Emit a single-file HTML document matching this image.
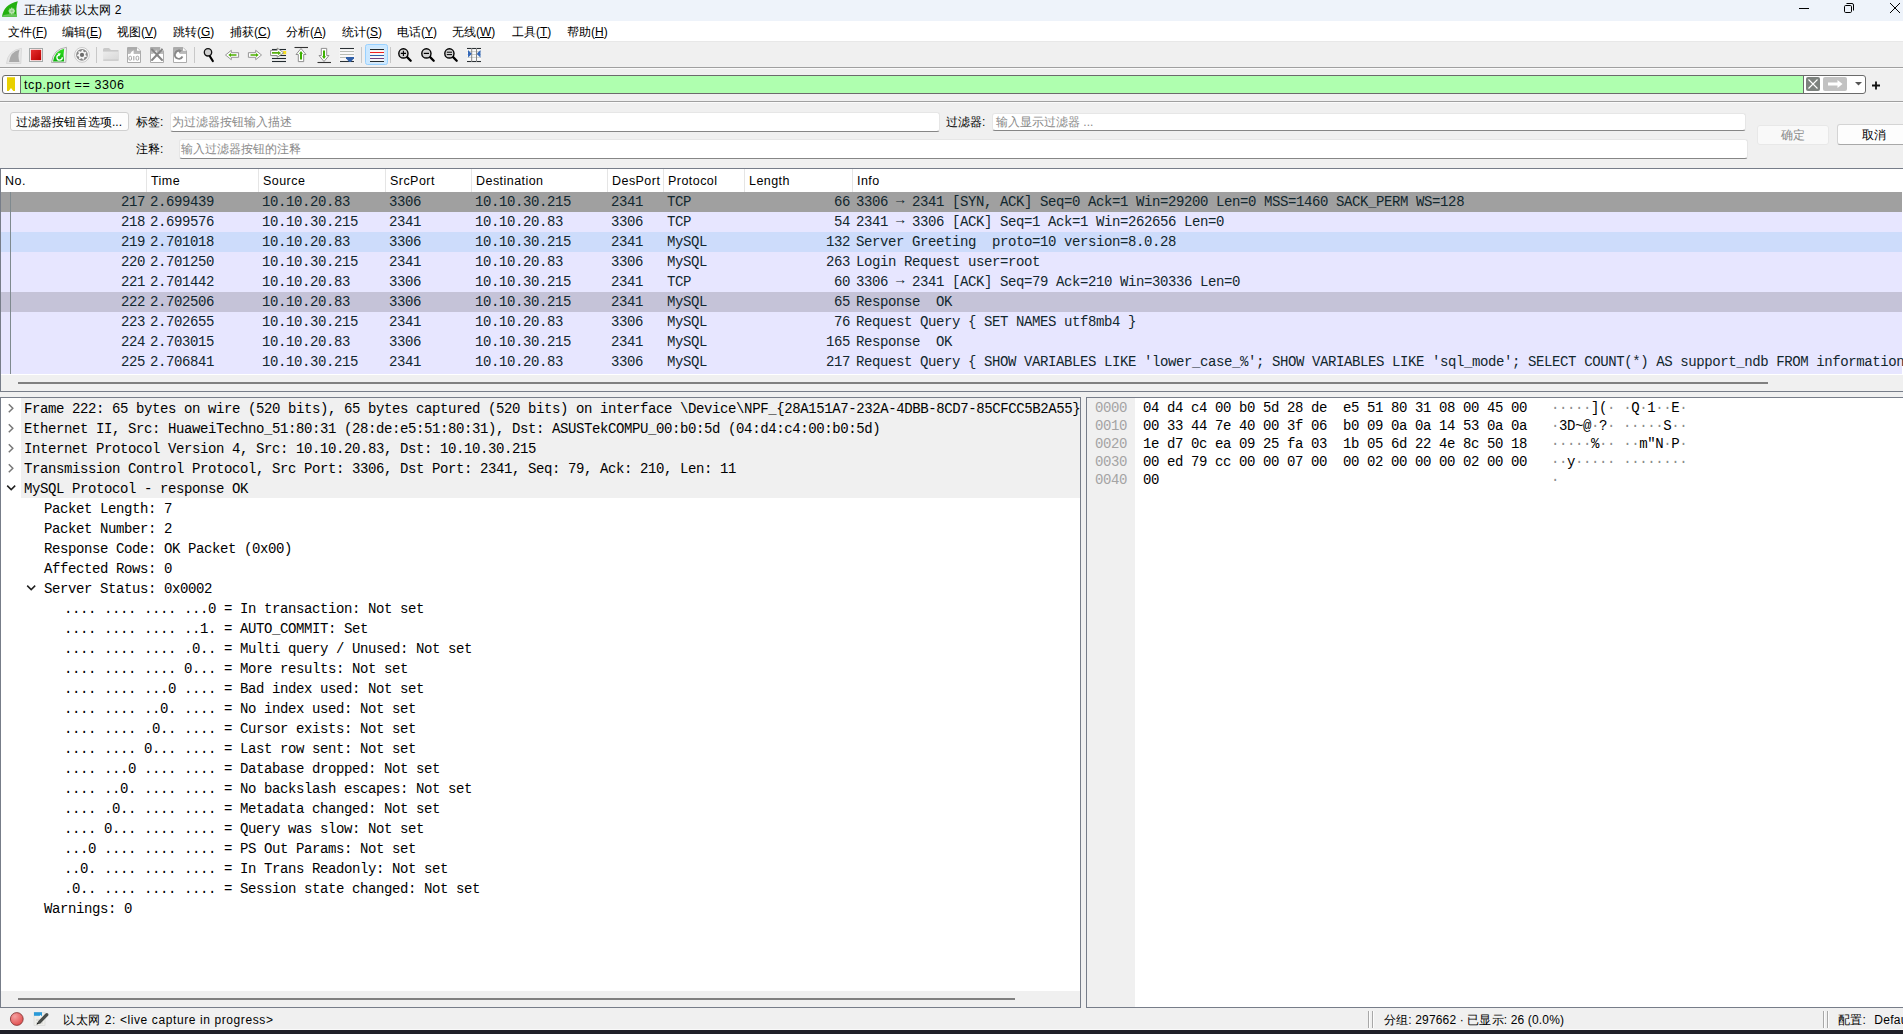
<!DOCTYPE html><html><head><meta charset="utf-8"><title>Wireshark</title><style>
*{box-sizing:border-box;margin:0;padding:0}
html,body{width:1903px;height:1034px;overflow:hidden;background:#f0f0f0}
body{position:relative;font-family:"Liberation Sans",sans-serif;font-size:12px;color:#000}
.a{position:absolute}
.m{position:absolute;font-family:"Liberation Mono",monospace;font-size:14px;letter-spacing:-0.4px;white-space:pre;line-height:20px}
.t{position:absolute;white-space:pre}
.l{letter-spacing:0.7px}
.pl{color:#12272e}
.d{color:#8c8c8c}
</style></head><body>
<div class="a" style="left:0;top:0;width:1903px;height:21px;background:#eef3fa"></div>
<div class="t" style="left:24px;top:1px;line-height:18px">正在捕获 以太网 2</div>
<div class="a" style="left:0;top:21px;width:1903px;height:21px;background:#fff"></div>
<div class="a" style="left:0;top:41px;width:1903px;height:1px;background:#e8e8e8"></div>
<div class="t" style="left:8px;top:23px;line-height:18px">文件(<u>F</u>)</div>
<div class="t" style="left:62px;top:23px;line-height:18px">编辑(<u>E</u>)</div>
<div class="t" style="left:117px;top:23px;line-height:18px">视图(<u>V</u>)</div>
<div class="t" style="left:173px;top:23px;line-height:18px">跳转(<u>G</u>)</div>
<div class="t" style="left:230px;top:23px;line-height:18px">捕获(<u>C</u>)</div>
<div class="t" style="left:286px;top:23px;line-height:18px">分析(<u>A</u>)</div>
<div class="t" style="left:342px;top:23px;line-height:18px">统计(<u>S</u>)</div>
<div class="t" style="left:397px;top:23px;line-height:18px">电话(<u>Y</u>)</div>
<div class="t" style="left:452px;top:23px;line-height:18px">无线(<u>W</u>)</div>
<div class="t" style="left:512px;top:23px;line-height:18px">工具(<u>T</u>)</div>
<div class="t" style="left:567px;top:23px;line-height:18px">帮助(<u>H</u>)</div>
<div class="a" style="left:0;top:67px;width:1903px;height:1px;background:#a0a0a0"></div>
<div class="a" style="left:0;top:68px;width:1903px;height:1px;background:#fbfbfb"></div>
<svg class="a" style="left:0;top:0" width="500" height="70" viewBox="0 0 500 70">
<defs>
<linearGradient id="gred" x1="0" y1="0" x2="1" y2="1"><stop offset="0" stop-color="#e83030"/><stop offset="1" stop-color="#b80000"/></linearGradient>
<linearGradient id="ggrn" x1="0" y1="0" x2="0" y2="1"><stop offset="0" stop-color="#30e020"/><stop offset="1" stop-color="#10b010"/></linearGradient>
<linearGradient id="gfold" x1="0" y1="0" x2="1" y2="1"><stop offset="0" stop-color="#ececec"/><stop offset="1" stop-color="#d8d8d8"/></linearGradient>
<linearGradient id="gdoc" x1="0" y1="0" x2="0" y2="1"><stop offset="0" stop-color="#a8a8a8"/><stop offset="1" stop-color="#c0c0c0"/></linearGradient>
</defs>
<path d="M6.5 63.5 Q7.5 50.5 21.5 48.3 L20.8 63.5 Z" fill="#e6e6e6" stroke="#d4d4d4" stroke-width="0.8"/>
<path d="M9 62 Q10.5 51.5 19.5 49.8 Q17.5 56 19.5 62 Z" fill="#aaaaaa"/>
<rect x="29.5" y="48.5" width="13" height="13" fill="#fff" stroke="#a4aaaa" stroke-width="1"/>
<rect x="30.8" y="49.8" width="10.4" height="10.4" fill="url(#gred)"/>
<path d="M51.5 62.5 Q53 49 66.5 47.3 L65.8 62.5 Z" fill="#f4f4f4" stroke="#a8a8a8" stroke-width="0.9"/>
<path d="M53 61.5 Q55 50.5 64.2 48.8 Q62.8 55 64.2 61.5 Z" fill="url(#ggrn)"/>
<path d="M62.3 57.3 A2.7 2.7 0 1 1 59.2 54.8" fill="none" stroke="#fff" stroke-width="1.3"/>
<path d="M57.6 53.2 L60.9 53.6 L59 56.6 Z" fill="#fff"/>
<circle cx="82" cy="54.9" r="7.4" fill="#fafafa" stroke="#c4c4c4" stroke-width="0.9"/>
<circle cx="82" cy="54.9" r="5.9" fill="#888"/>
<polygon points="82.00,50.00 83.09,50.12 83.52,51.75 84.18,52.16 85.83,51.84 86.41,52.77 85.41,54.12 85.50,54.90 86.78,55.99 86.41,57.03 84.74,57.08 84.18,57.64 84.13,59.31 83.09,59.68 82.00,58.40 81.22,58.31 79.87,59.31 78.94,58.73 79.26,57.08 78.85,56.42 77.22,55.99 77.10,54.90 78.59,54.12 78.85,53.38 78.17,51.84 78.94,51.07 80.48,51.75 81.22,51.49" fill="#f6f6f6"/>
<circle cx="82" cy="54.9" r="2.1" fill="#6c6c6c"/>
<line x1="96.5" y1="47" x2="96.5" y2="63" stroke="#c8c8c8" stroke-width="1"/>
<line x1="194.5" y1="47" x2="194.5" y2="63" stroke="#c8c8c8" stroke-width="1"/>
<line x1="361.5" y1="47" x2="361.5" y2="63" stroke="#c8c8c8" stroke-width="1"/>
<line x1="390.5" y1="47" x2="390.5" y2="63" stroke="#c8c8c8" stroke-width="1"/>
<path d="M103 49.5 Q103 48 104.5 48 L109 48 L111 50 L118.5 50 L118.5 60.6 L103 60.6 Z" fill="#c9c9c9"/>
<rect x="103" y="51.6" width="15.6" height="8.3" fill="url(#gfold)"/>
<rect x="103.5" y="59.6" width="15" height="1" fill="#c6c6c6"/>
<path d="M127.5 47.5 L137 47.5 L140.5 51 L140.5 62.5 L127.5 62.5 Z" fill="#fff" stroke="#acacac" stroke-width="1"/><path d="M128 48 L137 48 L140 51 L140 54 L128 54 Z" fill="url(#gdoc)"/><path d="M130.2 54 Q131.2 51.2 133.6 50.2 L133.6 54 Z" fill="#fff"/><path d="M137 48 L137 50.8 L140 50.8" fill="#fff"/><rect x="128.9" y="56.2" width="2.6" height="4" rx="1.1" fill="none" stroke="#a4a4a4" stroke-width="1"/><path d="M133.8 56 V60.4" stroke="#a4a4a4" stroke-width="1.1"/><rect x="136.1" y="56.2" width="2.6" height="4" rx="1.1" fill="none" stroke="#a4a4a4" stroke-width="1"/>
<path d="M150.5 47.5 L160 47.5 L163.5 51 L163.5 62.5 L150.5 62.5 Z" fill="#fff" stroke="#acacac" stroke-width="1"/><path d="M151 48 L160 48 L163 51 L163 54 L151 54 Z" fill="url(#gdoc)"/><path d="M153.2 54 Q154.2 51.2 156.6 50.2 L156.6 54 Z" fill="#fff"/><path d="M160 48 L160 50.8 L163 50.8" fill="#fff"/><path d="M152 49.5 L162 60 M162 49.5 L152 60" stroke="#858585" stroke-width="2" stroke-linecap="round"/>
<path d="M173.5 47.5 L183 47.5 L186.5 51 L186.5 62.5 L173.5 62.5 Z" fill="#fff" stroke="#acacac" stroke-width="1"/><path d="M174 48 L183 48 L186 51 L186 54 L174 54 Z" fill="url(#gdoc)"/><path d="M176.2 54 Q177.2 51.2 179.6 50.2 L179.6 54 Z" fill="#fff"/><path d="M183 48 L183 50.8 L186 50.8" fill="#fff"/><path d="M182.5 56.5 A4 4 0 1 1 179.5 50.8" fill="none" stroke="#888" stroke-width="1.8"/><path d="M178.5 49 L182 50.5 L179 53.2 Z" fill="#888"/>
<line x1="210" y1="56.5" x2="212.8" y2="61" stroke="#000" stroke-width="2.2" stroke-linecap="round"/>
<circle cx="208" cy="52.3" r="3.7" fill="#d0d0d0" stroke="#111" stroke-width="1.3"/>
<path d="M225.5 55 L231.3 50.3 L231.3 52.7 L238.6 52.7 L238.6 57.3 L231.3 57.3 L231.3 59.7 Z" fill="#fff" stroke="#8a8a8a" stroke-width="0.9" stroke-linejoin="round"/>
<path d="M228.3 55 L231 53 L231 54.2 L236.5 54.2 L236.5 55.8 L231 55.8 L231 57 Z" fill="#4caf00"/>
<path d="M261.5 55 L255.7 50.3 L255.7 52.7 L248.4 52.7 L248.4 57.3 L255.7 57.3 L255.7 59.7 Z" fill="#fff" stroke="#8a8a8a" stroke-width="0.9" stroke-linejoin="round"/>
<path d="M258.7 55 L256 53 L256 54.2 L250.5 54.2 L250.5 55.8 L256 55.8 L256 57 Z" fill="#4caf00"/>
<line x1="272" y1="49.5" x2="286" y2="49.5" stroke="#222a2e" stroke-width="1.1"/>
<line x1="272" y1="55.5" x2="286" y2="55.5" stroke="#222a2e" stroke-width="1.1"/>
<line x1="272" y1="58.5" x2="286" y2="58.5" stroke="#222a2e" stroke-width="1.1"/>
<line x1="272" y1="61.5" x2="286" y2="61.5" stroke="#222a2e" stroke-width="1.1"/>
<rect x="283" y="51" width="3.2" height="3.2" fill="#f8e020"/>
<path d="M270.6 50.4 L277.2 50.4 L277.2 48 L283.6 52.8 L277.2 57.3 L277.2 55.5 L270.6 55.5 Z" fill="#fff" stroke="#8a8a86" stroke-width="0.9" stroke-linejoin="round"/>
<path d="M272 52.1 L278 52.1 L278 50.9 L281.2 52.9 L278 55 L278 53.7 L272 53.7 Z" fill="#58b010"/>
<line x1="294.5" y1="47.5" x2="308" y2="47.5" stroke="#333" stroke-width="1.1"/>
<path d="M301 48.5 L306 54.5 L303.7 54.5 L303.7 61.6 L298.3 61.6 L298.3 54.5 L296 54.5 Z" fill="#fff" stroke="#858585" stroke-width="0.9" stroke-linejoin="round"/>
<path d="M301 51 L303 53.8 L302 53.8 L302 59.5 L300 59.5 L300 53.8 L299 53.8 Z" fill="#3cb000"/>
<line x1="317.5" y1="62.5" x2="331" y2="62.5" stroke="#333" stroke-width="1.1"/>
<path d="M324 61.5 L319 55.5 L321.3 55.5 L321.3 48.4 L326.7 48.4 L326.7 55.5 L329 55.5 Z" fill="#fff" stroke="#858585" stroke-width="0.9" stroke-linejoin="round"/>
<path d="M324 59 L322 56.2 L323 56.2 L323 50.5 L325 50.5 L325 56.2 L326 56.2 Z" fill="#3cb000"/>
<rect x="339.5" y="47.5" width="15" height="15" fill="#fff" opacity="0.6"/>
<line x1="340" y1="48.5" x2="354" y2="48.5" stroke="#2a3034" stroke-width="1.1"/>
<line x1="340" y1="51.5" x2="354" y2="51.5" stroke="#b8bcb4" stroke-width="1"/>
<line x1="340" y1="54.5" x2="354" y2="54.5" stroke="#b8bcb4" stroke-width="1"/>
<line x1="340" y1="57.5" x2="346" y2="57.5" stroke="#b8bcb4" stroke-width="1"/>
<line x1="340" y1="61.5" x2="354" y2="61.5" stroke="#2a3034" stroke-width="1.1"/>
<path d="M346 57 L354 57 L354 58.2 L350.8 62 L349.2 62 L346 58.2 Z" fill="#3060a8"/>
<rect x="365.5" y="44.5" width="22" height="20" rx="2" fill="#cce8ff" stroke="#99d1ff" stroke-width="1"/>
<rect x="370" y="48.5" width="14" height="14" fill="#fff"/>
<line x1="370" y1="49.5" x2="384" y2="49.5" stroke="#222a2e" stroke-width="1.1"/>
<line x1="370" y1="52.5" x2="384" y2="52.5" stroke="#f02020" stroke-width="1.1"/>
<line x1="370" y1="55.5" x2="384" y2="55.5" stroke="#3060a8" stroke-width="1.1"/>
<line x1="370" y1="58.5" x2="384" y2="58.5" stroke="#704080" stroke-width="1.1"/>
<line x1="370" y1="61.5" x2="384" y2="61.5" stroke="#222a2e" stroke-width="1.1"/>
<line x1="406.9" y1="56.9" x2="410.7" y2="60.699999999999996" stroke="#000" stroke-width="2.3" stroke-linecap="round"/>
<circle cx="403.4" cy="53.4" r="4.6" fill="#d2d2d2" stroke="#000" stroke-width="1.4"/>
<path d="M400.79999999999995 53.4 H406.0 M403.4 50.8 V56.0" stroke="#000" stroke-width="1.1"/>
<line x1="429.9" y1="56.9" x2="433.7" y2="60.699999999999996" stroke="#000" stroke-width="2.3" stroke-linecap="round"/>
<circle cx="426.4" cy="53.4" r="4.6" fill="#d2d2d2" stroke="#000" stroke-width="1.4"/>
<path d="M423.79999999999995 53.4 H429.0" stroke="#000" stroke-width="1.2"/>
<line x1="452.9" y1="56.9" x2="456.7" y2="60.699999999999996" stroke="#000" stroke-width="2.3" stroke-linecap="round"/>
<circle cx="449.4" cy="53.4" r="4.6" fill="#d2d2d2" stroke="#000" stroke-width="1.4"/>
<path d="M446.79999999999995 52.199999999999996 H452.0 M446.79999999999995 54.6 H452.0" stroke="#000" stroke-width="1"/>
<rect x="467" y="48" width="14" height="14" fill="#fff" opacity="0.7"/>
<line x1="467.5" y1="51.6" x2="481" y2="51.6" stroke="#c8ccc4" stroke-width="0.9"/>
<line x1="467.5" y1="54.5" x2="481" y2="54.5" stroke="#c8ccc4" stroke-width="0.9"/>
<line x1="467.5" y1="57.4" x2="481" y2="57.4" stroke="#c8ccc4" stroke-width="0.9"/>
<line x1="467" y1="48.5" x2="481" y2="48.5" stroke="#2a3034" stroke-width="1.1"/>
<line x1="467" y1="61.5" x2="481" y2="61.5" stroke="#2a3034" stroke-width="1.1"/>
<line x1="471.7" y1="48" x2="471.7" y2="62" stroke="#888" stroke-width="1"/>
<line x1="476.5" y1="48" x2="476.5" y2="62" stroke="#888" stroke-width="1"/>
<path d="M468 50 L471.2 53.2 L471.2 54.6 L468 57.6 Z" fill="#3468b8"/>
<path d="M480.5 50 L477.2 53.2 L477.2 54.6 L480.5 57.6 Z" fill="#3468b8"/>
<path d="M2 16.8 Q3.5 4.5 17.8 1.2 Q15.5 8 17 16.8 Z" fill="#22b010"/>
<path d="M3 16.3 L16.8 16.3 L16.6 14.2 Q10 13.6 3.5 15 Z" fill="#7ccc70" opacity="0.8"/>
<circle cx="11.8" cy="11" r="2.6" fill="#b8e0b0"/>
<circle cx="14.50" cy="11.00" r="0.7" fill="#c8ecc0"/>
<circle cx="13.71" cy="12.91" r="0.7" fill="#c8ecc0"/>
<circle cx="11.80" cy="13.70" r="0.7" fill="#c8ecc0"/>
<circle cx="9.89" cy="12.91" r="0.7" fill="#c8ecc0"/>
<circle cx="9.10" cy="11.00" r="0.7" fill="#c8ecc0"/>
<circle cx="9.89" cy="9.09" r="0.7" fill="#c8ecc0"/>
<circle cx="11.80" cy="8.30" r="0.7" fill="#c8ecc0"/>
<circle cx="13.71" cy="9.09" r="0.7" fill="#c8ecc0"/>
<circle cx="11.8" cy="11" r="1.2" fill="#90c888"/>
</svg>
<svg class="a" style="left:0;top:0" width="1903" height="20" viewBox="0 0 1903 20">
<line x1="1799" y1="8.5" x2="1809" y2="8.5" stroke="#000" stroke-width="1"/>
<rect x="1844.5" y="5.5" width="7" height="7" rx="1.2" fill="none" stroke="#000" stroke-width="1"/>
<path d="M1846.5 3.5 L1852 3.5 Q1853.5 3.5 1853.5 5 L1853.5 10.5" fill="none" stroke="#000" stroke-width="1"/>
<path d="M1890 3 L1900 13 M1900 3 L1890 13" stroke="#000" stroke-width="1"/>
</svg>
<div class="a" style="left:2px;top:75px;width:1864px;height:19px;border:1px solid #6b6b6b;border-radius:3px;background:#fff"></div>
<div class="a" style="left:20px;top:76px;width:1784px;height:17px;background:#afffaf;border-left:1px solid #6b6b6b;border-right:1px solid #6b6b6b"></div>
<svg class="a" style="left:7px;top:77px" width="10" height="15"><path d="M0 0.2 H8 V14 H6.3 L4 11 L1.7 14 H0 Z" fill="#e8d000"/></svg>
<div class="t l" style="left:24px;top:77px;line-height:17px;font-size:12.5px;letter-spacing:0.6px">tcp.port == 3306</div>
<svg class="a" style="left:1800px;top:74px" width="90" height="22"><rect x="6" y="3" width="14" height="14" rx="2" fill="#7d827e"/><path d="M8.5 5.5 L17.5 14.5 M17.5 5.5 L8.5 14.5" stroke="#fff" stroke-width="1.1"/><rect x="23" y="3" width="24" height="14" rx="2" fill="#c2c2c2"/><path d="M28 8.5 H37.5 V6 L42.5 10 L37.5 14 V11.5 H28 Z" fill="#fff"/><path d="M55 8 H62 L58.5 11.5 Z" fill="#555"/><path d="M72 11.5 H80 M76 7.5 V15.5" stroke="#111" stroke-width="1.8"/></svg>
<div class="a" style="left:0;top:101px;width:1903px;height:1px;background:#a0a0a0"></div>
<div class="a" style="left:0;top:102px;width:1903px;height:1px;background:#fbfbfb"></div>
<div class="a" style="left:10px;top:112px;width:119px;height:19px;border:1px solid #d0d0d0;border-radius:3px;background:#fdfdfd"></div>
<div class="t" style="left:16px;top:114px;line-height:17px">过滤器按钮首选项...</div>
<div class="t" style="left:136px;top:114px;line-height:17px">标签:</div>
<div class="a" style="left:170px;top:112px;width:770px;height:20px;background:#fff;border:1px solid #e6e6e6;border-bottom:1px solid #868686;border-radius:3px"></div>
<div class="t" style="left:172px;top:114px;line-height:17px;color:#8a8a8a">为过滤器按钮输入描述</div>
<div class="t" style="left:946px;top:114px;line-height:17px">过滤器:</div>
<div class="a" style="left:992px;top:113px;width:754px;height:18px;background:#fff;border:1px solid #e6e6e6;border-bottom:1px solid #868686;border-radius:3px"></div>
<div class="t" style="left:996px;top:114px;line-height:17px;color:#8a8a8a">输入显示过滤器 ...</div>
<div class="t" style="left:136px;top:141px;line-height:17px">注释:</div>
<div class="a" style="left:179px;top:139px;width:1569px;height:20px;background:#fff;border:1px solid #e6e6e6;border-bottom:1px solid #868686;border-radius:3px"></div>
<div class="t" style="left:181px;top:141px;line-height:17px;color:#8a8a8a">输入过滤器按钮的注释</div>
<div class="a" style="left:1757px;top:125px;width:72px;height:20px;background:#f9f9f9;border:1px solid #e8e8e8;border-radius:3px"></div>
<div class="t" style="left:1757px;top:127px;width:72px;text-align:center;line-height:17px;color:#8a8a8a">确定</div>
<div class="a" style="left:1837px;top:124px;width:80px;height:21px;background:#fdfdfd;border:1px solid #d4d4d4;border-bottom-color:#a8a8a8;border-radius:3px"></div>
<div class="t" style="left:1837px;top:127px;width:74px;text-align:center;line-height:17px">取消</div>
<div class="a" style="left:0;top:168px;width:1903px;height:224px;border:1px solid #777d89;border-right:none;background:#fff"></div>
<div class="t" style="left:5px;top:172px;line-height:18px;font-size:12.5px;letter-spacing:0.45px">No.</div>
<div class="a" style="left:146px;top:169px;width:1px;height:23px;background:#e5e5e5"></div>
<div class="t" style="left:151px;top:172px;line-height:18px;font-size:12.5px;letter-spacing:0.45px">Time</div>
<div class="a" style="left:258px;top:169px;width:1px;height:23px;background:#e5e5e5"></div>
<div class="t" style="left:263px;top:172px;line-height:18px;font-size:12.5px;letter-spacing:0.45px">Source</div>
<div class="a" style="left:385px;top:169px;width:1px;height:23px;background:#e5e5e5"></div>
<div class="t" style="left:390px;top:172px;line-height:18px;font-size:12.5px;letter-spacing:0.45px">SrcPort</div>
<div class="a" style="left:471px;top:169px;width:1px;height:23px;background:#e5e5e5"></div>
<div class="t" style="left:476px;top:172px;line-height:18px;font-size:12.5px;letter-spacing:0.45px">Destination</div>
<div class="a" style="left:607px;top:169px;width:1px;height:23px;background:#e5e5e5"></div>
<div class="t" style="left:612px;top:172px;line-height:18px;font-size:12.5px;letter-spacing:0.45px">DesPort</div>
<div class="a" style="left:663px;top:169px;width:1px;height:23px;background:#e5e5e5"></div>
<div class="t" style="left:668px;top:172px;line-height:18px;font-size:12.5px;letter-spacing:0.45px">Protocol</div>
<div class="a" style="left:744px;top:169px;width:1px;height:23px;background:#e5e5e5"></div>
<div class="t" style="left:749px;top:172px;line-height:18px;font-size:12.5px;letter-spacing:0.45px">Length</div>
<div class="a" style="left:852px;top:169px;width:1px;height:23px;background:#e5e5e5"></div>
<div class="t" style="left:857px;top:172px;line-height:18px;font-size:12.5px;letter-spacing:0.45px">Info</div>
<div class="a" style="left:1px;top:192px;width:1901px;height:20px;background:#a0a0a0"></div>
<div class="m pl" style="left:0;top:192px;width:145px;text-align:right">217</div>
<div class="m pl" style="left:150px;top:192px">2.699439</div>
<div class="m pl" style="left:262px;top:192px">10.10.20.83</div>
<div class="m pl" style="left:389px;top:192px">3306</div>
<div class="m pl" style="left:475px;top:192px">10.10.30.215</div>
<div class="m pl" style="left:611px;top:192px">2341</div>
<div class="m pl" style="left:667px;top:192px">TCP</div>
<div class="m pl" style="left:744px;top:192px;width:106px;text-align:right">66</div>
<div class="m pl" style="left:856px;top:192px;width:1047px;overflow:hidden">3306 <span style="position:relative;top:-2px">→</span> 2341 [SYN, ACK] Seq=0 Ack=1 Win=29200 Len=0 MSS=1460 SACK_PERM WS=128</div>
<div class="a" style="left:1px;top:212px;width:1901px;height:20px;background:#e7e6ff"></div>
<div class="m pl" style="left:0;top:212px;width:145px;text-align:right">218</div>
<div class="m pl" style="left:150px;top:212px">2.699576</div>
<div class="m pl" style="left:262px;top:212px">10.10.30.215</div>
<div class="m pl" style="left:389px;top:212px">2341</div>
<div class="m pl" style="left:475px;top:212px">10.10.20.83</div>
<div class="m pl" style="left:611px;top:212px">3306</div>
<div class="m pl" style="left:667px;top:212px">TCP</div>
<div class="m pl" style="left:744px;top:212px;width:106px;text-align:right">54</div>
<div class="m pl" style="left:856px;top:212px;width:1047px;overflow:hidden">2341 <span style="position:relative;top:-2px">→</span> 3306 [ACK] Seq=1 Ack=1 Win=262656 Len=0</div>
<div class="a" style="left:1px;top:232px;width:1901px;height:20px;background:#cddcfb"></div>
<div class="m pl" style="left:0;top:232px;width:145px;text-align:right">219</div>
<div class="m pl" style="left:150px;top:232px">2.701018</div>
<div class="m pl" style="left:262px;top:232px">10.10.20.83</div>
<div class="m pl" style="left:389px;top:232px">3306</div>
<div class="m pl" style="left:475px;top:232px">10.10.30.215</div>
<div class="m pl" style="left:611px;top:232px">2341</div>
<div class="m pl" style="left:667px;top:232px">MySQL</div>
<div class="m pl" style="left:744px;top:232px;width:106px;text-align:right">132</div>
<div class="m pl" style="left:856px;top:232px;width:1047px;overflow:hidden">Server Greeting  proto=10 version=8.0.28</div>
<div class="a" style="left:1px;top:252px;width:1901px;height:20px;background:#e7e6ff"></div>
<div class="m pl" style="left:0;top:252px;width:145px;text-align:right">220</div>
<div class="m pl" style="left:150px;top:252px">2.701250</div>
<div class="m pl" style="left:262px;top:252px">10.10.30.215</div>
<div class="m pl" style="left:389px;top:252px">2341</div>
<div class="m pl" style="left:475px;top:252px">10.10.20.83</div>
<div class="m pl" style="left:611px;top:252px">3306</div>
<div class="m pl" style="left:667px;top:252px">MySQL</div>
<div class="m pl" style="left:744px;top:252px;width:106px;text-align:right">263</div>
<div class="m pl" style="left:856px;top:252px;width:1047px;overflow:hidden">Login Request user=root</div>
<div class="a" style="left:1px;top:272px;width:1901px;height:20px;background:#e7e6ff"></div>
<div class="m pl" style="left:0;top:272px;width:145px;text-align:right">221</div>
<div class="m pl" style="left:150px;top:272px">2.701442</div>
<div class="m pl" style="left:262px;top:272px">10.10.20.83</div>
<div class="m pl" style="left:389px;top:272px">3306</div>
<div class="m pl" style="left:475px;top:272px">10.10.30.215</div>
<div class="m pl" style="left:611px;top:272px">2341</div>
<div class="m pl" style="left:667px;top:272px">TCP</div>
<div class="m pl" style="left:744px;top:272px;width:106px;text-align:right">60</div>
<div class="m pl" style="left:856px;top:272px;width:1047px;overflow:hidden">3306 <span style="position:relative;top:-2px">→</span> 2341 [ACK] Seq=79 Ack=210 Win=30336 Len=0</div>
<div class="a" style="left:1px;top:292px;width:1901px;height:20px;background:#c5c3d8"></div>
<div class="m pl" style="left:0;top:292px;width:145px;text-align:right">222</div>
<div class="m pl" style="left:150px;top:292px">2.702506</div>
<div class="m pl" style="left:262px;top:292px">10.10.20.83</div>
<div class="m pl" style="left:389px;top:292px">3306</div>
<div class="m pl" style="left:475px;top:292px">10.10.30.215</div>
<div class="m pl" style="left:611px;top:292px">2341</div>
<div class="m pl" style="left:667px;top:292px">MySQL</div>
<div class="m pl" style="left:744px;top:292px;width:106px;text-align:right">65</div>
<div class="m pl" style="left:856px;top:292px;width:1047px;overflow:hidden">Response  OK</div>
<div class="a" style="left:1px;top:312px;width:1901px;height:20px;background:#e7e6ff"></div>
<div class="m pl" style="left:0;top:312px;width:145px;text-align:right">223</div>
<div class="m pl" style="left:150px;top:312px">2.702655</div>
<div class="m pl" style="left:262px;top:312px">10.10.30.215</div>
<div class="m pl" style="left:389px;top:312px">2341</div>
<div class="m pl" style="left:475px;top:312px">10.10.20.83</div>
<div class="m pl" style="left:611px;top:312px">3306</div>
<div class="m pl" style="left:667px;top:312px">MySQL</div>
<div class="m pl" style="left:744px;top:312px;width:106px;text-align:right">76</div>
<div class="m pl" style="left:856px;top:312px;width:1047px;overflow:hidden">Request Query { SET NAMES utf8mb4 }</div>
<div class="a" style="left:1px;top:332px;width:1901px;height:20px;background:#e7e6ff"></div>
<div class="m pl" style="left:0;top:332px;width:145px;text-align:right">224</div>
<div class="m pl" style="left:150px;top:332px">2.703015</div>
<div class="m pl" style="left:262px;top:332px">10.10.20.83</div>
<div class="m pl" style="left:389px;top:332px">3306</div>
<div class="m pl" style="left:475px;top:332px">10.10.30.215</div>
<div class="m pl" style="left:611px;top:332px">2341</div>
<div class="m pl" style="left:667px;top:332px">MySQL</div>
<div class="m pl" style="left:744px;top:332px;width:106px;text-align:right">165</div>
<div class="m pl" style="left:856px;top:332px;width:1047px;overflow:hidden">Response  OK</div>
<div class="a" style="left:1px;top:352px;width:1901px;height:20px;background:#e7e6ff"></div>
<div class="m pl" style="left:0;top:352px;width:145px;text-align:right">225</div>
<div class="m pl" style="left:150px;top:352px">2.706841</div>
<div class="m pl" style="left:262px;top:352px">10.10.30.215</div>
<div class="m pl" style="left:389px;top:352px">2341</div>
<div class="m pl" style="left:475px;top:352px">10.10.20.83</div>
<div class="m pl" style="left:611px;top:352px">3306</div>
<div class="m pl" style="left:667px;top:352px">MySQL</div>
<div class="m pl" style="left:744px;top:352px;width:106px;text-align:right">217</div>
<div class="m pl" style="left:856px;top:352px;width:1047px;overflow:hidden">Request Query { SHOW VARIABLES LIKE 'lower_case_%'; SHOW VARIABLES LIKE 'sql_mode'; SELECT COUNT(*) AS support_ndb FROM information_schema.ENGINES</div>
<div class="a" style="left:1px;top:372px;width:1901px;height:2px;background:#e7e6ff"></div>
<div class="a" style="left:10px;top:192px;width:1px;height:182px;background:#7f8a8f"></div>
<div class="a" style="left:1px;top:375px;width:1902px;height:16px;background:#f0f0f0"></div>
<div class="a" style="left:18px;top:382px;width:1750px;height:2px;background:#808080"></div>
<div class="a" style="left:0;top:397px;width:1081px;height:611px;border:1px solid #777d89;background:#fff"></div>
<div class="a" style="left:21px;top:398px;width:1059px;height:100px;background:#f0f0f0"></div>
<div class="m" style="left:24px;top:399px">Frame 222: 65 bytes on wire (520 bits), 65 bytes captured (520 bits) on interface \Device\NPF_{28A151A7-232A-4DBB-8CD7-85CFCC5B2A55}</div>
<svg class="a" style="left:7px;top:403px" width="8" height="11"><path d="M1.8 1.2 L5.8 5.2 L1.8 9.2" fill="none" stroke="#787878" stroke-width="1.5"/></svg>
<div class="m" style="left:24px;top:419px">Ethernet II, Src: HuaweiTechno_51:80:31 (28:de:e5:51:80:31), Dst: ASUSTekCOMPU_00:b0:5d (04:d4:c4:00:b0:5d)</div>
<svg class="a" style="left:7px;top:423px" width="8" height="11"><path d="M1.8 1.2 L5.8 5.2 L1.8 9.2" fill="none" stroke="#787878" stroke-width="1.5"/></svg>
<div class="m" style="left:24px;top:439px">Internet Protocol Version 4, Src: 10.10.20.83, Dst: 10.10.30.215</div>
<svg class="a" style="left:7px;top:443px" width="8" height="11"><path d="M1.8 1.2 L5.8 5.2 L1.8 9.2" fill="none" stroke="#787878" stroke-width="1.5"/></svg>
<div class="m" style="left:24px;top:459px">Transmission Control Protocol, Src Port: 3306, Dst Port: 2341, Seq: 79, Ack: 210, Len: 11</div>
<svg class="a" style="left:7px;top:463px" width="8" height="11"><path d="M1.8 1.2 L5.8 5.2 L1.8 9.2" fill="none" stroke="#787878" stroke-width="1.5"/></svg>
<div class="m" style="left:24px;top:479px">MySQL Protocol - response OK</div>
<svg class="a" style="left:6px;top:484px" width="11" height="8"><path d="M1.2 1.6 L5.2 5.6 L9.2 1.6" fill="none" stroke="#202020" stroke-width="1.5"/></svg>
<div class="m" style="left:44px;top:499px">Packet Length: 7</div>
<div class="m" style="left:44px;top:519px">Packet Number: 2</div>
<div class="m" style="left:44px;top:539px">Response Code: OK Packet (0x00)</div>
<div class="m" style="left:44px;top:559px">Affected Rows: 0</div>
<div class="m" style="left:44px;top:579px">Server Status: 0x0002</div>
<svg class="a" style="left:26px;top:584px" width="11" height="8"><path d="M1.2 1.6 L5.2 5.6 L9.2 1.6" fill="none" stroke="#202020" stroke-width="1.5"/></svg>
<div class="m" style="left:64px;top:599px">.... .... .... ...0 = In transaction: Not set</div>
<div class="m" style="left:64px;top:619px">.... .... .... ..1. = AUTO_COMMIT: Set</div>
<div class="m" style="left:64px;top:639px">.... .... .... .0.. = Multi query / Unused: Not set</div>
<div class="m" style="left:64px;top:659px">.... .... .... 0... = More results: Not set</div>
<div class="m" style="left:64px;top:679px">.... .... ...0 .... = Bad index used: Not set</div>
<div class="m" style="left:64px;top:699px">.... .... ..0. .... = No index used: Not set</div>
<div class="m" style="left:64px;top:719px">.... .... .0.. .... = Cursor exists: Not set</div>
<div class="m" style="left:64px;top:739px">.... .... 0... .... = Last row sent: Not set</div>
<div class="m" style="left:64px;top:759px">.... ...0 .... .... = Database dropped: Not set</div>
<div class="m" style="left:64px;top:779px">.... ..0. .... .... = No backslash escapes: Not set</div>
<div class="m" style="left:64px;top:799px">.... .0.. .... .... = Metadata changed: Not set</div>
<div class="m" style="left:64px;top:819px">.... 0... .... .... = Query was slow: Not set</div>
<div class="m" style="left:64px;top:839px">...0 .... .... .... = PS Out Params: Not set</div>
<div class="m" style="left:64px;top:859px">..0. .... .... .... = In Trans Readonly: Not set</div>
<div class="m" style="left:64px;top:879px">.0.. .... .... .... = Session state changed: Not set</div>
<div class="m" style="left:44px;top:899px">Warnings: 0</div>
<div class="a" style="left:1px;top:991px;width:1079px;height:16px;background:#f0f0f0"></div>
<div class="a" style="left:18px;top:998px;width:997px;height:2px;background:#808080"></div>
<div class="a" style="left:1086px;top:397px;width:817px;height:611px;border:1px solid #777d89;border-right:none;background:#fff"></div>
<div class="a" style="left:1087px;top:398px;width:48px;height:609px;background:#f0f0f0"></div>
<div class="m" style="left:1095px;top:399px;line-height:18px;color:#a4a4a4">0000</div>
<div class="m" style="left:1143px;top:399px;line-height:18px">04 d4 c4 00 b0 5d 28 de  e5 51 80 31 08 00 45 00</div>
<div class="m" style="left:1551px;top:399px;line-height:18px"><span class="d">·</span><span class="d">·</span><span class="d">·</span><span class="d">·</span><span class="d">·</span>](<span class="d">·</span> <span class="d">·</span>Q<span class="d">·</span>1<span class="d">·</span><span class="d">·</span>E<span class="d">·</span></div>
<div class="m" style="left:1095px;top:417px;line-height:18px;color:#a4a4a4">0010</div>
<div class="m" style="left:1143px;top:417px;line-height:18px">00 33 44 7e 40 00 3f 06  b0 09 0a 0a 14 53 0a 0a</div>
<div class="m" style="left:1551px;top:417px;line-height:18px"><span class="d">·</span>3D~@<span class="d">·</span>?<span class="d">·</span> <span class="d">·</span><span class="d">·</span><span class="d">·</span><span class="d">·</span><span class="d">·</span>S<span class="d">·</span><span class="d">·</span></div>
<div class="m" style="left:1095px;top:435px;line-height:18px;color:#a4a4a4">0020</div>
<div class="m" style="left:1143px;top:435px;line-height:18px">1e d7 0c ea 09 25 fa 03  1b 05 6d 22 4e 8c 50 18</div>
<div class="m" style="left:1551px;top:435px;line-height:18px"><span class="d">·</span><span class="d">·</span><span class="d">·</span><span class="d">·</span><span class="d">·</span>%<span class="d">·</span><span class="d">·</span> <span class="d">·</span><span class="d">·</span>m&quot;N<span class="d">·</span>P<span class="d">·</span></div>
<div class="m" style="left:1095px;top:453px;line-height:18px;color:#a4a4a4">0030</div>
<div class="m" style="left:1143px;top:453px;line-height:18px">00 ed 79 cc 00 00 07 00  00 02 00 00 00 02 00 00</div>
<div class="m" style="left:1551px;top:453px;line-height:18px"><span class="d">·</span><span class="d">·</span>y<span class="d">·</span><span class="d">·</span><span class="d">·</span><span class="d">·</span><span class="d">·</span> <span class="d">·</span><span class="d">·</span><span class="d">·</span><span class="d">·</span><span class="d">·</span><span class="d">·</span><span class="d">·</span><span class="d">·</span></div>
<div class="m" style="left:1095px;top:471px;line-height:18px;color:#a4a4a4">0040</div>
<div class="m" style="left:1143px;top:471px;line-height:18px">00</div>
<div class="m" style="left:1551px;top:471px;line-height:18px"><span class="d">·</span></div>
<div class="a" style="left:0;top:1008px;width:1903px;height:22px;background:#f0f0f0"></div>
<div class="a" style="left:0;top:1029px;width:1903px;height:1px;background:#fafafa"></div>
<svg class="a" style="left:8px;top:1010px" width="42" height="18"><defs><radialGradient id="rb" cx="0.35" cy="0.3" r="0.8"><stop offset="0" stop-color="#f4a0a0"/><stop offset="1" stop-color="#e04848"/></radialGradient></defs><circle cx="8.8" cy="9" r="6.4" fill="url(#rb)" stroke="#7a3030" stroke-width="0.8"/><rect x="26" y="2.5" width="11" height="13" fill="#eeeeea" stroke="#d8d8d8" stroke-width="0.6"/><rect x="26" y="2.2" width="8" height="3.6" fill="#2a9ad8"/><path d="M28 10 H34 M28 13 H35" stroke="#c8c8c8" stroke-width="0.8"/><path d="M28.6 14.4 L30.2 11.2 L37.6 3.6 Q38.8 2.6 40 3.6 Q41 4.8 39.8 6 L32.4 13.4 Z" fill="#4a4d4a"/><path d="M28.6 14.4 L29.4 12.8 L30.4 13.8 Z" fill="#111"/><path d="M31 8 Q31.5 5.5 33 4.8 L33 6.5 Z" fill="#fff"/></svg>
<div class="t l" style="left:63px;top:1012px;line-height:17px;letter-spacing:0.6px">以太网 2: &lt;live capture in progress&gt;</div>
<div class="a" style="left:1368px;top:1011px;width:1px;height:17px;background:#a8a8a8"></div>
<div class="a" style="left:1369px;top:1011px;width:1px;height:17px;background:#fcfcfc"></div>
<div class="a" style="left:1372px;top:1011px;width:1px;height:17px;background:#a8a8a8"></div>
<div class="a" style="left:1373px;top:1011px;width:1px;height:17px;background:#fcfcfc"></div>
<div class="a" style="left:1823px;top:1011px;width:1px;height:17px;background:#a8a8a8"></div>
<div class="a" style="left:1824px;top:1011px;width:1px;height:17px;background:#fcfcfc"></div>
<div class="a" style="left:1827px;top:1011px;width:1px;height:17px;background:#a8a8a8"></div>
<div class="a" style="left:1828px;top:1011px;width:1px;height:17px;background:#fcfcfc"></div>
<div class="t" style="left:1384px;top:1012px;line-height:17px;letter-spacing:0.15px">分组: 297662 · 已显示: 26 (0.0%)</div>
<div class="t" style="left:1838px;top:1012px;line-height:17px;letter-spacing:0.3px">配置:<span style="margin-left:8px">Default</span></div>
<div class="a" style="left:0;top:1030px;width:1903px;height:4px;background:#202028"></div>
</body></html>
